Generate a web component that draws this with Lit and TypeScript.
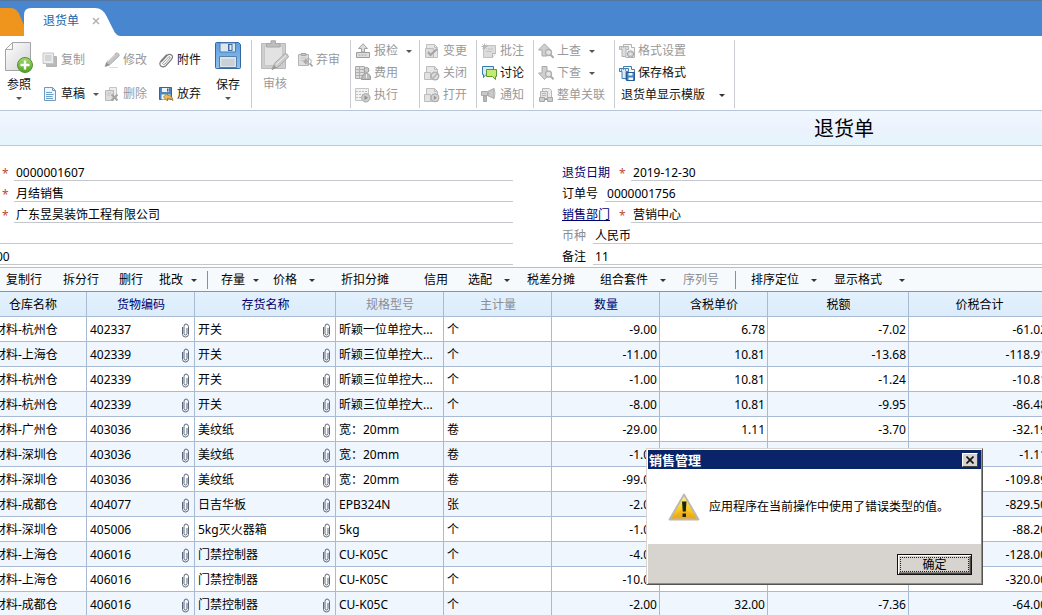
import { LitElement, html, css, svg, nothing } from "lit";
import { customElement, property } from "lit/decorators.js";
import { classMap } from "lit/directives/class-map.js";

/* Small 16x16 toolbar glyphs. */
const page = (fill: string, line: string) => svg`<path d="M2.5 1.5h8l3 3v10h-11z" fill=${fill} stroke=${line}/><path d="M10.5 1.5v3h3" fill="none" stroke=${line}/>`;
const arrowUp = svg`<path d="M6.500 .8L12.500 7H9v6H4V7H.5z" fill="#cfcfcf" stroke="#aaa"/><circle cx="10.500" cy="9.500" r="3" fill="#e4e4e4" stroke="#b0b0b0" stroke-width="1.300"/><path d="M12.600 11.800l3 3" stroke="#aaa" stroke-width="2"/>`;
const arrowDown = svg`<path d="M6.500 14.500L.5 8H4V1.500h5V8h3.500z" fill="#cfcfcf" stroke="#aaa"/><circle cx="10.500" cy="9" r="3" fill="#e4e4e4" stroke="#b0b0b0" stroke-width="1.300"/><path d="M12.600 11.300l3 3" stroke="#aaa" stroke-width="2"/>`;
const format = (fill: string, line: string) => svg`<path d="M4.500 3.500V1.500h8v3h3v10h-9" fill="#f4f6f8" stroke=${line}/><path d="M.5 3.500h9v3H7v7H3v-7H.5z" fill=${fill} stroke=${line}/><path d="M2.500 4v2M4.500 4v1M6.500 4v2" stroke=${line} stroke-width=".7"/>`;
const clipboard = svg`<path d="M1.500 2.500h10v11h-10z" fill="#ddd" stroke="#b4b4b4"/><path d="M4 3.500V1.500h5v2z" fill="#c4c4c4" stroke="#a8a8a8"/><path d="M3.500 6h6M3.500 8.500h4" stroke="#c4c4c4"/>`;

const icons: Record<string, unknown> = {
  copy: svg`<path d="M4.500 4.500h10v10h-10z" fill="#b9b9b9" stroke="#b4b4b4"/><path d="M1 1h10.500v10.500H1z" fill="#ececec" stroke="#c4c4c4"/><path d="M3 4h6.500M3 6h6.500M3 8h6.500" stroke="#bcbcbc"/>`,
  draft: svg`${page("#edf6fc", "#6c9ac2")}<path d="M4 6.500h6M4 8.500h7.500M4 10.500h6.500M4 12.500h7" stroke="#6e9fc9"/>`,
  edit: svg`<path d="M1 14.500l1.800-4.500L12 1.200q1.200-.8 2.500.5t.4 2.500L5.500 13z" fill="#c4c4c4" stroke="#b0b0b0"/><path d="M2.500 10.500l3 2.500-4 1.500z" fill="#8c8c8c"/><path d="M4 9l7-6.500" stroke="#eee"/><path d="M5 15.500h9" stroke="#ddd"/>`,
  remove: svg`<path d="M5.500 1.500h7v11h-7z" fill="#eee" stroke="#c4c4c4"/><path d="M1.500 4.500h8v10h-8z" fill="#ddd" stroke="#b8b8b8"/><path d="M3 7h4M3 9h3" stroke="#c4c4c4"/><path d="M7.500 8.500l6 6M13.500 8.500l-6 6" stroke="#a4a4a4" stroke-width="2"/>`,
  clip: svg`<g fill="none" stroke-linecap="round"><path d="M3.500 9.500L9 3.500q2.500-2.300 4.700-.3 1.800 2-.4 4.500l-5.500 6q-2.700 2.300-5 .3-2-2.200.2-5L8.500 3" stroke="#7c7c7c" stroke-width="1.200"/><path d="M5 11l5.800-6.200q1.500-.6 1.300 1.200L7 12q-1.700 1.300-2.500-.2" stroke="#999" stroke-width="1"/></g>`,
  discard: svg`<path d="M1.500 1.500h12v12h-12z" fill="#4f87bd" stroke="#39648f"/><path d="M4 2h7v4H4z" fill="#eef5fa"/><path d="M9 2.500h1.500v3H9z" fill="#39648f"/><path d="M3.500 8.500h9v5h-9z" fill="#f5f7f9"/><path d="M5.500 11l4-4v2.200q5 .2 5.500 5.300-2-2.300-5.500-2.300V15z" fill="#ecbd56" stroke="#a56b1b" stroke-width=".8"/>`,
  unaudit: svg`${clipboard}<path d="M6 9.500l3-3v2h3v2H9v2z" fill="#aaa"/><circle cx="11.500" cy="9.500" r="2.800" fill="none" stroke="#a8a8a8"/><path d="M13 11.500l2.500 3" stroke="#a0a0a0" stroke-width="1.600"/>`,
  inspect: svg`<path d="M8 .8l4.500 4.700H9.500V9h-3V5.500h-3z" fill="#ddd" stroke="#a2a2a2"/><path d="M1.500 9.500h13v5h-13z" fill="#ddd" stroke="#9c9c9c"/><path d="M3.500 12h9" stroke="#a6a6a6" stroke-dasharray="2 1"/>`,
  fee: svg`<path d="M.5 1.500h9v12h-9z" fill="#dcdcdc" stroke="#aaa"/><path d="M1 4.500h8M1 7.500h8M1 10.500h8M4.500 2v11" stroke="#b0b0b0"/><circle cx="11.500" cy="5" r="2.500" fill="#ccc" stroke="#999"/><path d="M6.500 14.500q.5-6 5-6t4 6z" fill="#bbb" stroke="#999"/><path d="M11.500 9v4" stroke="#eee"/>`,
  run: svg`<path d="M.5 1.500h13v12H.5z" fill="#f2f2f2" stroke="#c4c4c4"/><path d="M1 4.500h12M1 7.500h12M1 10.500h12" stroke="#bdbdbd" stroke-dasharray="2 1"/><circle cx="10.800" cy="10.800" r="4.200" fill="#ccc" stroke="#a8a8a8"/><path d="M9.500 8.500l3.500 2.300-3.500 2.300z" fill="#8c8c8c"/>`,
  change: svg`${page("#e6e6e6", "#c0c0c0")}<path d="M1.500 5.500h8v9h-8z" fill="#ddd" stroke="#bcbcbc"/><path d="M4 9l2.500 3L13 6" fill="none" stroke="#a4a4a4" stroke-width="2"/>`,
  close: svg`${page("#e6e6e6", "#bcbcbc")}<path d="M.5 7.500h6v7h-6z" fill="#e2e2e2" stroke="#bcbcbc"/><circle cx="11" cy="11" r="3.800" fill="#ddd" stroke="#b0b0b0" stroke-width="1.400"/><path d="M8.500 13.500l5-5" stroke="#b0b0b0" stroke-width="1.400"/>`,
  open: svg`${page("#e6e6e6", "#bcbcbc")}<path d="M.5 7.500h6v7h-6z" fill="#e2e2e2" stroke="#bcbcbc"/><circle cx="11" cy="10.800" r="4" fill="#d5d5d5" stroke="#a8a8a8"/><path d="M9.800 8.600l3.200 2.200-3.200 2.200z" fill="#969696"/>`,
  note: svg`<path d="M2.500 2.500h12v8l-3 4h-9z" fill="#dcdcdc" stroke="#c0c0c0"/><path d="M14.500 10.500h-3v4" fill="#f5f5f5" stroke="#b4b4b4"/><path d="M3.500 .5v6M.5 3.500h6M1.500 1.500l4 4M5.500 1.500l-4 4" stroke="#b8b8b8"/><path d="M7 6h5M5 8.500h6" stroke="#c4c4c4"/>`,
  chat: svg`<path d="M1.500 1.500h11v8H5l-2.500 3V9.500h-1z" fill="#d5ecfa" stroke="#387bac"/><path d="M5.500 4.500h10v7h-1v3l-3-3h-6z" fill="#c3eb72" stroke="#5f9732"/>`,
  notify: svg`<path d="M.5 4.500h6L13 1.500v10l-6.500-3h-6z" fill="#c8c8c8" stroke="#aaa"/><path d="M2.500 9h3v5.500h-3z" fill="#b8b8b8" stroke="#a6a6a6"/><path d="M13 1.500q2 5 0 10" fill="#eee" stroke="#b4b4b4"/><path d="M7 5v3.500" stroke="#999"/>`,
  up: arrowUp,
  down: arrowDown,
  relate: svg`<path d="M4.500 1.500h7l2 2v7h-9z" fill="#eaeaea" stroke="#b8b8b8"/><path d="M2.500 4.500h7v7h-7z" fill="#e2e2e2" stroke="#b4b4b4"/><path d="M4 6.500h4M4 8.500h4" stroke="#b8b8b8"/><path d="M1.500 10.500h5v4h-5zM9.500 10.500h5v4h-5z" fill="#ccc" stroke="#a8a8a8"/><path d="M6.500 12.500h3" stroke="#999"/>`,
  formatSet: svg`${format("#ddd", "#b2b2b2")}<circle cx="11.500" cy="11" r="3.200" fill="#ccc" stroke="#a8a8a8"/><circle cx="11.500" cy="11" r="1" fill="#f5f5f5"/>`,
  formatSave: svg`${format("#d8eafa", "#447eae")}<path d="M7.500 7.500h8v8h-8z" fill="#3f83c3" stroke="#265d90"/><path d="M9.500 8h4v2.500h-4zM9.500 12.500h4.500V15H9.500z" fill="#f3f8fc"/>`,
};

const bigIcons: Record<string, unknown> = {
  refer: svg`<defs><linearGradient id="pg" x2="1" y2="1"><stop offset="0" stop-color="#fff"/><stop offset=".6" stop-color="#e4e4e6"/><stop offset="1" stop-color="#cfd0d2"/></linearGradient><linearGradient id="gr" x2="0" y2="1"><stop offset="0" stop-color="#a7d874"/><stop offset="1" stop-color="#4da322"/></linearGradient></defs><path d="M7.500 1.500h18v28h-25V8.500z" fill="url(#pg)" stroke="#a2a4a8"/><path d="M7.500 1.500v7h-7z" fill="#fafafa" stroke="#a6a8ac"/><circle cx="20" cy="24" r="7.500" fill="url(#gr)" stroke="#4f942b"/><path d="M20 19.500v9M15.500 24h9" stroke="#fff" stroke-width="2.400"/>`,
  save: svg`<defs><linearGradient id="fl" x2="0" y2="1"><stop offset="0" stop-color="#5d9fe0"/><stop offset="1" stop-color="#8fc1ef"/></linearGradient></defs><path d="M1.500 2.500q0-1 1-1h22l2 2v23q0 1-1 1h-23q-1 0-1-1z" fill="url(#fl)" stroke="#34699f"/><path d="M6 2h15.500v9H6z" fill="#dfe7ee" stroke="#4a7fb4"/><path d="M14 3h4.500v7H14z" fill="#3a6ca1"/><path d="M15.500 4h2v5h-2z" fill="#e9f0f6"/><path d="M5.500 15.500h17v11h-17z" fill="#dde3e9" stroke="#5582ad"/><path d="M7.500 18h13v7h-13z" fill="#c8d0d8"/>`,
  audit: svg`<path d="M.5 3.500h24v25H.5z" fill="#cecece" stroke="#b8b8b8"/><path d="M3.500 6.500h18v19h-18z" fill="#e2e2e2" stroke="#c6c6c6"/><path d="M5.500 7V3.500H10V.8h4.500V3.500H19V7z" fill="#bdbdbd" stroke="#a8a8a8"/><path d="M11 29.500l2.500-6L24 13.500q3 0 3.500 3.500L17 27z" fill="#cbcbcb" stroke="#a6a6a6"/><path d="M15 24.500l10-9" stroke="#f1f1f1"/><path d="M11 29.500l2-4.500 2.500 2.800z" fill="#999"/>`,
};

const paperclip = html`<svg class="clip" width="9" height="15" viewBox="0 0 9 15" aria-hidden="true"><path d="M1.500 4v7.500q.3 2.500 3 2.500t3-2.500V3.500Q7 1 5 1T3 3.500v7q.2 1.500 1.500 1.500T6 10.500V5" fill="none" stroke="#5a6577"/></svg>`;

interface Cmd { text: string; icon?: string; on?: boolean; menu?: boolean; }

@customElement("tool-button")
class ToolButton extends LitElement {
  @property() icon = "";
  @property() text = "";
  @property({ type: Boolean }) on = false;
  @property({ type: Boolean }) menu = false;
  @property({ type: Boolean }) big = false;

  static styles = css`
    :host { display: flex; }
    button { display: flex; align-items: center; gap: 3px; margin: 0; padding: 0; border: 0; background: none; color: #999; font: inherit; line-height: 16px; white-space: nowrap; }
    .on { color: #111; }
    .big { flex-direction: column; gap: 4px; }
    .arrow { border: 3px solid transparent; border-top-color: #555; border-bottom: 0; margin-left: 5px; }
    .big .arrow { margin: 0; }
    svg { display: block; flex: none; }
  `;

  render() {
    const size = this.big ? 28 : 16;
    return html`<button ?disabled=${!this.on} class=${classMap({ on: this.on, big: this.big })}>
      ${this.icon ? html`<svg width=${size} height=${this.big ? 32 : 16} viewBox="0 0 ${size} ${this.big ? 32 : 16}" aria-hidden="true">${this.big ? bigIcons[this.icon] : icons[this.icon]}</svg>` : nothing}
      <span>${this.text}</span>${this.menu ? html`<span class="arrow"></span>` : nothing}
    </button>`;
  }
}

const editCmds: Cmd[] = [
  { text: "复制", icon: "copy" }, { text: "修改", icon: "edit" }, { text: "附件", icon: "clip", on: true },
  { text: "草稿", icon: "draft", on: true, menu: true }, { text: "删除", icon: "remove" }, { text: "放弃", icon: "discard", on: true },
];

const groups: { name: string; items: Cmd[] }[] = [
  { name: "g-check", items: [{ text: "报检", icon: "inspect", menu: true }, { text: "费用", icon: "fee" }, { text: "执行", icon: "run" }] },
  { name: "g-small", items: [{ text: "变更", icon: "change" }, { text: "关闭", icon: "close" }, { text: "打开", icon: "open" }] },
  { name: "g-small", items: [{ text: "批注", icon: "note" }, { text: "讨论", icon: "chat", on: true }, { text: "通知", icon: "notify" }] },
  { name: "g-link", items: [{ text: "上查", icon: "up", menu: true }, { text: "下查", icon: "down", menu: true }, { text: "整单关联", icon: "relate" }] },
];

const lineCmds: { text: string; arrow?: string; off?: boolean; sep?: boolean }[] = [
  { text: "复制行" }, { text: "拆分行" }, { text: "删行" }, { text: "批改", arrow: "near" }, { text: "", sep: true },
  { text: "存量", arrow: "near" }, { text: "价格", arrow: "mid" }, { text: "折扣分摊" }, { text: "信用" },
  { text: "选配", arrow: "mid" }, { text: "税差分摊" }, { text: "组合套件", arrow: "mid" }, { text: "序列号", off: true },
  { text: "", sep: true }, { text: "排序定位", arrow: "mid" }, { text: "显示格式", arrow: "far" },
];

const heads: [string, string][] = [
  ["仓库名称", ""], ["货物编码", "navy"], ["存货名称", "navy"], ["规格型号", "gray"], ["主计量", "gray"],
  ["数量", "navy"], ["含税单价", ""], ["税额", ""], ["价税合计", ""],
];

const rows: string[][] = [
  ["材料-杭州仓", "402337", "开关", "昕颖一位单控大...", "个", "-9.00", "6.78", "-7.02", "-61.02"],
  ["材料-上海仓", "402339", "开关", "昕颖三位单控大...", "个", "-11.00", "10.81", "-13.68", "-118.91"],
  ["材料-杭州仓", "402339", "开关", "昕颖三位单控大...", "个", "-1.00", "10.81", "-1.24", "-10.81"],
  ["材料-杭州仓", "402339", "开关", "昕颖三位单控大...", "个", "-8.00", "10.81", "-9.95", "-86.48"],
  ["材料-广州仓", "403036", "美纹纸", "宽：20mm", "卷", "-29.00", "1.11", "-3.70", "-32.19"],
  ["材料-深圳仓", "403036", "美纹纸", "宽：20mm", "卷", "-1.00", "", "", "-1.11"],
  ["材料-深圳仓", "403036", "美纹纸", "宽：20mm", "卷", "-99.00", "", "", "-109.89"],
  ["材料-成都仓", "404077", "日吉华板", "EPB324N", "张", "-2.00", "", "", "-829.50"],
  ["材料-深圳仓", "405006", "5kg灭火器箱", "5kg", "个", "-1.00", "", "", "-88.20"],
  ["材料-上海仓", "406016", "门禁控制器", "CU-K05C", "个", "-4.00", "", "", "-128.00"],
  ["材料-上海仓", "406016", "门禁控制器", "CU-K05C", "个", "-10.00", "", "", "-320.00"],
  ["材料-成都仓", "406016", "门禁控制器", "CU-K05C", "个", "-2.00", "32.00", "-7.36", "-64.00"],
];

@customElement("app-root")
class AppRoot extends LitElement {
  static styles = css`
    :host { display: block; position: relative; height: 100vh; overflow: hidden; background: #fff; color: #000; font: 12px/16px "Noto Sans", "Noto Sans CJK SC", sans-serif; }
    *, *::before { box-sizing: border-box; }
    button { margin: 0; padding: 0; border: 0; background: none; font: inherit; color: inherit; white-space: nowrap; }
    svg { display: block; }

    .tabs { display: flex; height: 36px; padding-top: 7px; background: #4986d0; border-top: 1px solid #55779f; }
    .home { width: 24px; flex: none; }
    .home svg { width: 24px; height: 28px; }
    .tab { display: grid; grid-template-columns: 96px; }
    .tab > * { grid-area: 1 / 1; }
    .tab-label { display: flex; align-items: center; gap: 13px; padding: 0 0 3px 19px; color: #1c65a8; z-index: 1; }
    .x { width: 8px; height: 8px; }

    .ribbon { display: flex; height: 75px; padding: 4px 0 2px; border-bottom: 1px solid #b9c6da; background: #fff; }
    .group { display: flex; flex: none; border-right: 1px solid #c9ccd1; }
    .g-edit { padding-left: 5px; width: 252px; }
    .g-edit .grid { display: grid; grid-template-columns: 62px 54px 56px; grid-template-rows: 34px 34px; padding: 3px 0 0 9px; margin-bottom: -8px; }
    .g-edit > tool-button { padding-top: 1px; }
    .g-audit { width: 99px; gap: 8px; padding-left: 9px; }
    .g-audit .side { padding-top: 12px; }
    .stack { display: grid; grid-template-rows: repeat(3, 22px); padding: 0 0 0 4px; margin-bottom: 0; }
    .g-check { width: 69px; }
    .g-small { width: 57px; }
    .g-link { width: 81px; }
    .g-format { width: 120px; }
    .template { width: 105px; height: 20px; margin: 0; padding: 0 0 0 2px; border: 0; appearance: none; background: transparent; color: #111; font: inherit; }
    .select { display: flex; align-items: center; }
    .arrow { flex: none; border: 3px solid transparent; border-top-color: #333; border-bottom: 0; }
    .select .arrow { margin-left: -5px; pointer-events: none; }

    .title { height: 35px; padding-left: 62%; border-bottom: 1px solid #bccbd8; background: linear-gradient(#f0f8fe, #edf2fd 50%, #e4f5fc); text-align: center; }
    h1 { margin: 0; font-size: 20px; line-height: 36px; font-weight: 400; }

    .form { display: grid; grid-template-columns: 513px 1fr; column-gap: 49px; padding: 14px 0 2px; }
    .field { display: flex; height: 21px; }
    .field label, .field a { padding-top: 5px; margin-right: 7px; white-space: nowrap; }
    .star { width: 12px; flex: none; padding-top: 6px; color: #bd4b35; }
    .right .star { margin-left: 2px; }
    .left .star { width: 14px; padding-left: 2px; }
    input { flex: 1; min-width: 0; margin: 0; padding: 5px 0 0 2px; border: 0; border-bottom: 1px solid #c4c8cc; border-radius: 0; background: none; color: #000; font: inherit; outline: 0; }
    .cut { margin-left: -6px; }
    .navy { color: #00006c; }
    .gray { color: #8a8d92; }

    .lines { display: grid; grid-template-columns: 57px 56px 40px 48px 14px 52px 68px 83px 44px 59px 73px 83px 52px 16px 83px 1fr; align-items: center; height: 25px; padding: 1px 0 0 6px; border-top: 1px solid #b5bfcc; border-bottom: 1px solid #8b939f; background: #f7fafd; }
    .lines button { display: flex; align-items: center; }
    .sep { width: 1px; height: 18px; background: #8c8f94; }
    .near { margin-left: 8px; }
    .mid { margin-left: 12px; }
    .far { margin-left: 17px; }

    .table { overflow: hidden; }
    table { width: calc(100% + 29px); margin-left: -21px; border-collapse: separate; border-spacing: 0; table-layout: fixed; }
    .w1 { width: 108px; }
    .w2 { width: 141px; }
    th, td { height: 25px; padding: 2px 2px 0 3px; border-right: 1px solid #a9bad4; border-bottom: 1px solid #a9bad4; white-space: nowrap; overflow: hidden; }
    th { font-weight: 400; background: linear-gradient(#e4f1fd, #dbecfb); }
    td { text-align: left; }
    td:first-child { padding-left: 15px; }
    tbody tr:nth-child(even) { background: #eff6fd; }
    td.num { text-align: right; }
    .with-clip { display: flex; align-items: center; justify-content: space-between; padding-right: 2px; }

    .dialog { position: absolute; left: 646px; top: 448px; width: 337px; padding: 1px; border: 1px solid; border-color: #d8d4cf #55534f #55534f #d8d4cf; background: #d7d3ce; box-shadow: inset 1px 1px #fff, inset -1px -1px #908d88; }
    .caption { display: flex; align-items: center; justify-content: space-between; height: 19px; padding: 0 3px 0 1px; background: #0a246a; color: #fff; }
    .caption h2 { margin: 0; font-size: 13px; line-height: 18px; font-weight: 700; }
    .shut { display: grid; place-items: center; width: 16px; height: 14px; background: #d7d3ce; border: 1px solid; border-color: #fff #45433f #45433f #fff; }
    .message { display: flex; align-items: center; height: 75px; padding-left: 20px; gap: 9px; background: #fff; }
    .message p { margin: 0; }
    .foot { display: flex; justify-content: flex-end; padding: 10px 9px; height: 39px; }
    .ok { width: 75px; height: 21px; padding: 2px; border: 1px solid #111; background: #d7d3ce; box-shadow: inset 1px 1px #fff, inset -1px -1px #4c4a47, inset -2px -2px #8d8a85; }
    .ok span { display: block; height: 15px; line-height: 14px; border: 1px dotted #222; }
  `;

  private cmd(c: Cmd) {
    return html`<tool-button .text=${c.text} .icon=${c.icon ?? ""} ?on=${c.on} ?menu=${c.menu}></tool-button>`;
  }

  private leftField(name: string, value: string, star: boolean, cls = "") {
    return html`<div class="field">${star ? html`<span class="star">*</span>` : nothing}<input class=${cls} aria-label=${name} .value=${value}></div>`;
  }

  private rightField(id: string, name: string, value: string, tone = "", star = false) {
    return html`<div class="field">
      <label class=${tone} for=${id}>${name}</label>${star ? html`<span class="star">*</span>` : nothing}<input id=${id} .value=${value}>
    </div>`;
  }

  private cell(v: string, i: number) {
    if (i === 1 || i === 2) return html`<td><div class="with-clip">${v}${paperclip}</div></td>`;
    return html`<td class=${i > 4 ? "num" : ""}>${v}</td>`;
  }

  render() {
    return html`
      <nav class="tabs">
        <div class="home"><svg viewBox="0 0 24 28" aria-hidden="true"><path d="M0 0h11q6 0 9 8l4 9v11H0z" fill="#ef941d"/></svg></div>
        <div class="tab">
          <svg width="96" height="28" viewBox="0 0 96 28" aria-hidden="true"><path d="M0 28V7Q0 0 7 0h64q8 0 12 9l6 12q3 7 7 7z" fill="#fff"/></svg>
          <div class="tab-label"><span>退货单</span>
            <button aria-label="关闭标签"><svg class="x" viewBox="0 0 8 8"><path d="M1 1l6 6M7 1L1 7" stroke="#b4b4b4" stroke-width="1.600"/></svg></button>
          </div>
        </div>
      </nav>

      <div class="ribbon">
        <div class="group g-edit">
          <tool-button big on menu icon="refer" text="参照"></tool-button>
          <div class="grid">${editCmds.map((c) => this.cmd(c))}</div>
          <tool-button big on menu icon="save" text="保存"></tool-button>
        </div>
        <div class="group g-audit">
          <tool-button big icon="audit" text="审核"></tool-button>
          <div class="side"><tool-button icon="unaudit" text="弃审"></tool-button></div>
        </div>
        ${groups.map((g) => html`<div class="group stack ${g.name}">${g.items.map((c) => this.cmd(c))}</div>`)}
        <div class="group stack g-format">
          <tool-button icon="formatSet" text="格式设置"></tool-button>
          <tool-button on icon="formatSave" text="保存格式"></tool-button>
          <div class="select">
            <select class="template" aria-label="显示模版"><option>退货单显示模版</option></select><span class="arrow"></span>
          </div>
        </div>
      </div>

      <header class="title"><h1>退货单</h1></header>

      <section class="form">
        <div class="left">
          ${this.leftField("单号", "0000001607", true)}
          ${this.leftField("业务类型", "月结销售", true)}
          ${this.leftField("客户", "广东昱昊装饰工程有限公司", true)}
          ${this.leftField("地址", "", false)}
          ${this.leftField("金额", "00", false, "cut")}
        </div>
        <div class="right">
          ${this.rightField("date", "退货日期", "2019-12-30", "navy", true)}
          ${this.rightField("order", "订单号", "0000001756")}
          <div class="field"><a class="navy" href="#dept">销售部门</a><span class="star">*</span><input id="dept" aria-label="销售部门" .value=${"营销中心"}></div>
          ${this.rightField("currency", "币种", "人民币", "gray")}
          ${this.rightField("memo", "备注", "11")}
        </div>
      </section>

      <div class="lines">
        ${lineCmds.map((c) => c.sep
          ? html`<span class="sep"></span>`
          : html`<button class=${c.off ? "gray" : ""} ?disabled=${c.off}>${c.text}${c.arrow ? html`<span class="arrow ${c.arrow}"></span>` : nothing}</button>`)}
      </div>

      <div class="table">
        <table>
          <colgroup><col class="w1"><col class="w1"><col class="w2"><col class="w1"><col class="w1"><col class="w1"><col class="w1"><col class="w2"><col></colgroup>
          <thead><tr>${heads.map(([t, tone]) => html`<th class=${tone}>${t}</th>`)}</tr></thead>
          <tbody>${rows.map((r) => html`<tr>${r.map((v, i) => this.cell(v, i))}</tr>`)}</tbody>
        </table>
      </div>

      <div class="dialog" role="alertdialog" aria-labelledby="dt" aria-describedby="dm">
        <div class="caption"><h2 id="dt">销售管理</h2>
          <button class="shut" aria-label="关闭"><svg width="8" height="8" viewBox="0 0 8 8"><path d="M.5 .5l7 7M7.500 .5l-7 7" stroke="#111" stroke-width="1.600"/></svg></button>
        </div>
        <div class="message">
          <svg width="32" height="28" viewBox="0 0 32 28" aria-hidden="true">
            <defs><linearGradient id="wg" x2="0" y2="1"><stop offset="0" stop-color="#fff3a0"/><stop offset=".5" stop-color="#fbd62c"/><stop offset="1" stop-color="#eda20f"/></linearGradient></defs>
            <path d="M16 1.500L30.500 26.500H1.500z" fill="url(#wg)" stroke="#b9b9b0" stroke-width="1.800" stroke-linejoin="round"/>
            <path d="M16 15L28 25H4z" fill="#f0a91c" opacity=".45"/>
            <path d="M14 8.500h4.500l-.7 10h-3z" fill="#1d2418"/><path d="M14.500 20.500h3.500v3.500h-3.500z" fill="#1d2418"/>
          </svg>
          <p id="dm">应用程序在当前操作中使用了错误类型的值。</p>
        </div>
        <div class="foot"><button class="ok"><span>确定</span></button></div>
      </div>
    `;
  }
}
